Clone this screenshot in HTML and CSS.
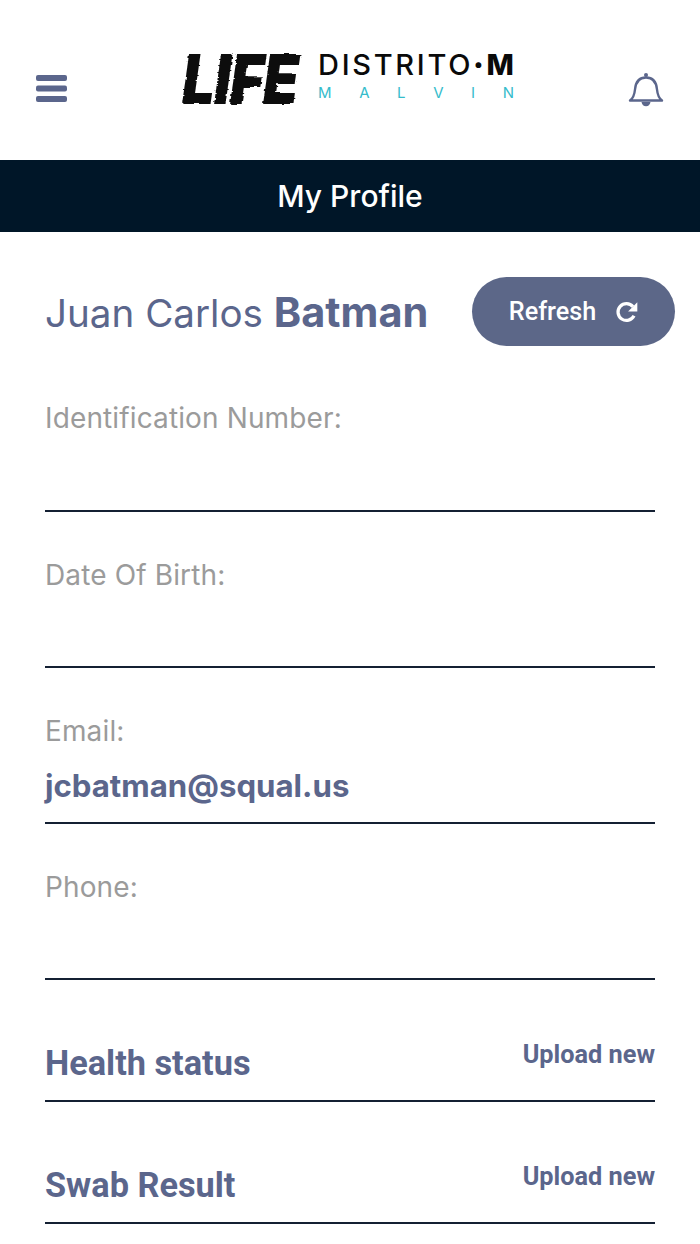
FILE: index.html
```html
<!DOCTYPE html>
<html lang="en">
<head>
<meta charset="utf-8">
<title>My Profile</title>
<link rel="stylesheet" href="styles.css">
</head>
<body>
<svg class="defs" width="0" height="0" aria-hidden="true"><filter id="rough" x="-5%" y="-5%" width="110%" height="110%"><feTurbulence type="fractalNoise" baseFrequency="0.06 0.35" numOctaves="2" seed="4"/><feDisplacementMap in="SourceGraphic" scale="3.500"/></filter></svg>
<header class="topbar">
  <button class="icon-btn" aria-label="Menu">
    <svg width="32" height="28" viewBox="0 0 32 28"><g fill="#5b668c"><rect width="31" height="6" x="0" y="0" rx="2"/><rect width="31" height="6" x="0" y="10.500" rx="2"/><rect width="31" height="6" x="0" y="21" rx="2"/></g></svg>
  </button>
  <div class="logo">
    <span class="logo-life">LIFE</span>
    <div class="logo-right">
      <span class="logo-distrito">DISTRITO<span class="logo-dot">·</span><b>M</b></span>
      <span class="logo-malvin"><span>M</span><span>A</span><span>L</span><span>V</span><span>I</span><span>N</span></span>
    </div>
  </div>
  <button class="icon-btn" aria-label="Notifications">
    <svg width="36" height="38" viewBox="0 0 36 38"><g fill="none" stroke="#5b668c" stroke-width="2.400" stroke-linejoin="round" stroke-linecap="round"><path d="M2 30.500c3.500-2.500 4.500-6 5-11 .6-7 4-12 11-12s10.400 5 11 12c.5 5 1.500 8.500 5 11z"/></g><circle cx="18" cy="5" r="2" fill="#5b668c"/><path d="M13.500 32h9c-.5 2.800-2.200 4.200-4.500 4.200s-4-1.400-4.500-4.200z" fill="#5b668c"/></svg>
  </button>
</header>
<div class="title-bar">My Profile</div>
<main class="content">
  <div class="name-row">
    <h1 class="name">Juan Carlos <b>Batman</b></h1>
    <button class="refresh">Refresh
      <svg width="26" height="26" viewBox="0 0 24 24"><path d="M18.500 15.500a7.800 7.800 0 1 1-1-8.500" fill="none" stroke="#fff" stroke-width="3"/><path d="M21.500 3v8.500H13z" fill="#fff"/></svg>
    </button>
  </div>
  <div class="field"><span class="label">Identification Number:</span><span class="value"></span></div>
  <div class="field"><span class="label">Date Of Birth:</span><span class="value"></span></div>
  <div class="field"><span class="label">Email:</span><span class="value">jcbatman@squal.us</span></div>
  <div class="field"><span class="label">Phone:</span><span class="value"></span></div>
  <div class="upload-row"><span class="upload-title">Health status</span><a class="upload-link">Upload new</a></div>
  <div class="upload-row"><span class="upload-title">Swab Result</span><a class="upload-link">Upload new</a></div>
</main>
</body>
</html>
```
FILE: styles.css
```css
* { box-sizing: border-box; }
html, body { margin: 0; padding: 0; background: #fff; }
body { width: 700px; height: 1244px; overflow: hidden; font-family: Inter, "Liberation Sans", sans-serif; }
.defs { position: absolute; }
.topbar { height: 160px; display: flex; align-items: flex-start; justify-content: space-between; padding: 0 36px; }
.icon-btn { border: 0; background: none; padding: 0; display: block; margin-top: 75px; }
.icon-btn:last-child { margin-top: 70px; margin-right: 0; }
.logo { display: flex; align-items: flex-start; margin: 46px 0 0 0; }
.logo-life { font: italic 900 69px/66px Inter, sans-serif; letter-spacing: -1px; color: #0a0a0a; width: 136px; transform: scaleX(0.840); transform-origin: left; filter: url(#rough); }
.logo-right { display: flex; flex-direction: column; width: 196px; }
.logo-distrito { font: 500 29px/30px Inter, sans-serif; letter-spacing: 2.700px; color: #0a0a0a; margin-top: 4px; white-space: nowrap; }
.logo-dot { font-weight: 900; }
.logo-distrito b { font-weight: 800; }
.logo-malvin { display: flex; justify-content: space-between; font: 400 15px/18px Inter, sans-serif; color: #35bccb; margin-top: 4px; }
.title-bar { height: 72px; background: #001628; color: #fff; font: 500 30px/72px Inter, sans-serif; text-align: center; }
.content { padding: 45px 45px 0; }
.name-row { display: flex; align-items: center; justify-content: space-between; height: 69px; margin-right: -20px; }
.name { margin: 0; padding-top: 1px; font: 400 38.600px/46px Inter, sans-serif; color: #5b668c; white-space: nowrap; }
.name b { font-weight: 700; font-size: 41.500px; }
.refresh { width: 203px; height: 69px; border: 0; border-radius: 35px; background: #5c6788; color: #fff; font: 500 25.200px/28px Roboto, sans-serif; display: flex; align-items: center; justify-content: center; gap: 18px; padding: 0 0 0 2px; }
.field { height: 156px; display: flex; flex-direction: column; border-bottom: 2px solid #142033; }
.name-row + .field { height: 166px; padding-top: 9px; }
.label { font: 400 28px/32px Inter, sans-serif; color: #9b9b9b; margin-top: 47px; letter-spacing: 0.130px; }
.value { font: 700 31.200px/40px Inter, sans-serif; color: #5b668c; margin-top: 19px; }
.upload-row { height: 122px; display: flex; justify-content: space-between; align-items: flex-start; border-bottom: 2px solid #142033; }
.upload-title { font: 700 34.300px/38px Roboto, sans-serif; color: #5b668c; margin-top: 64px; }
.upload-link { font: 700 25.300px/28px Roboto, sans-serif; color: #5b668c; margin-top: 61px; }
```
